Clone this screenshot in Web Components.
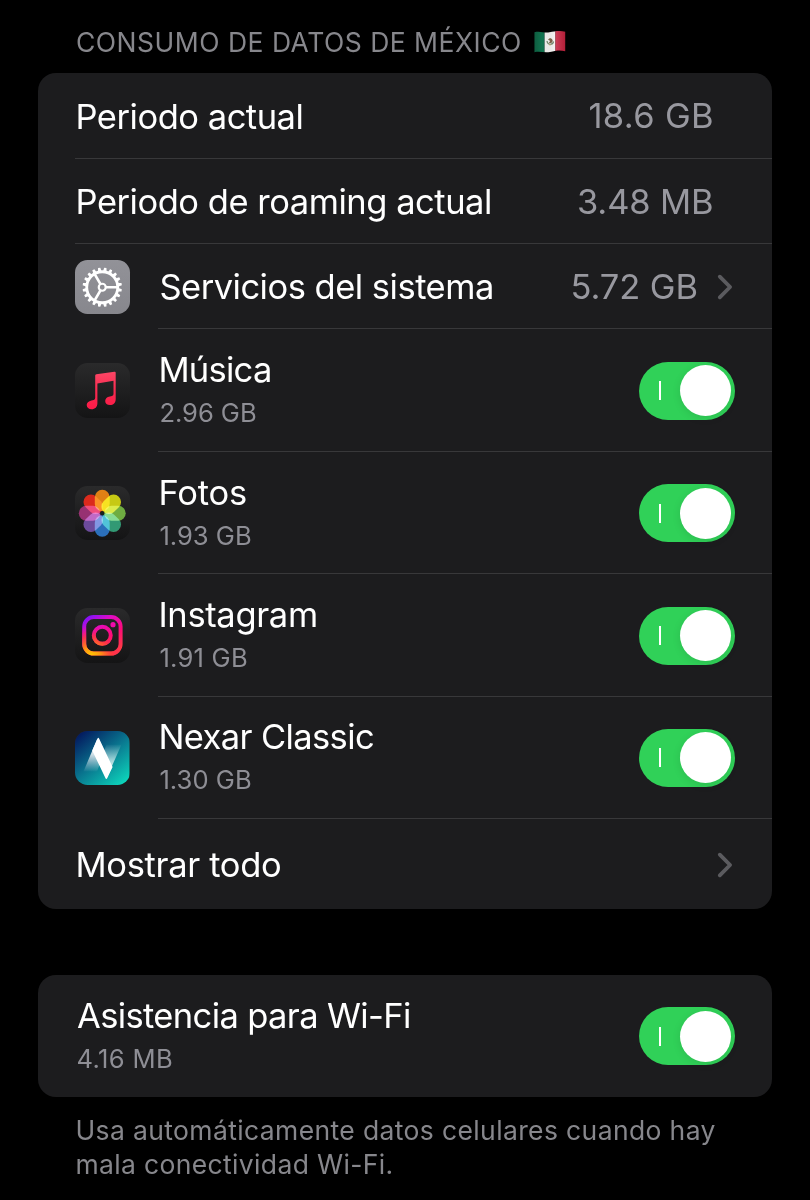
<!DOCTYPE html>
<html lang="es">
<head>
<meta charset="utf-8">
<title>Datos celulares</title>
<style>
html,body{margin:0;background:#000}
body{width:810px;height:1200px;overflow:hidden;font-family:Inter,"Liberation Sans",sans-serif;color:#fff}
</style>
</head>
<body>
<settings-page></settings-page>
<script>
const define = (name, html, Base = HTMLElement) => customElements.define(name, class extends Base {
  constructor() {
    super();
    const t = document.createElement('template');
    t.innerHTML = html;
    this.attachShadow({ mode: 'open' }).append(t.content.cloneNode(true));
  }
});

/* One line of text whose letters are tracked to fill the width in "w". */
const ctx = document.createElement('canvas').getContext('2d');
customElements.define('fit-text', class extends HTMLElement {
  constructor() {
    super();
    this.attachShadow({ mode: 'open' }).innerHTML =
      '<style>:host{display:block;white-space:pre;flex:none}</style><slot></slot>';
  }
  connectedCallback() {
    const w = +this.getAttribute('w'), s = getComputedStyle(this), text = this.textContent;
    ctx.font = `${s.fontWeight} ${s.fontSize} ${s.fontFamily}`;
    const m = ctx.measureText(text);
    const left = m.actualBoundingBoxLeft / 2;
    const ink = left + m.actualBoundingBoxRight;
    this.style.width = w + 'px';
    this.style.letterSpacing = ((w - ink) / (text.length - 1)).toFixed(3) + 'px';
    this.style.textIndent = left.toFixed(2) + 'px';
  }
});

define('ios-switch', `
<style>
:host{display:flex;align-items:center;box-sizing:border-box;width:96px;height:58px;border-radius:29px;background:#30d158;padding:0 3.5px 0 20.5px;justify-content:space-between;flex:none}
i{width:2px;height:19px;background:#fff}
b{width:51px;height:51px;border-radius:50%;background:#fff;box-shadow:0 2px 9px rgba(0,0,0,.1)}
</style><i></i><b></b>`);

define('ios-chevron', `
<style>:host{display:block;width:16px;height:26px;flex:none;margin-right:2px}svg{display:block}</style>
<svg width="16" height="26" viewBox="0 0 16 26" fill="none" stroke="#5b5b5f" stroke-width="3.800" stroke-linecap="round" stroke-linejoin="round"><path d="M2.8 2.7 13.1 13 2.8 23.3"/></svg>`);

define('mexico-flag', `
<style>:host{display:block;width:32px;height:24px;flex:none}svg{display:block}</style>
<svg width="32" height="24" viewBox="0 0 32 24">
<defs><clipPath id="f"><path d="M.5 2.2C6 .6 10 3.2 15.5 2.3S25 .3 31.2 1.7V21.3C26 19.8 21 20.8 16 22S6 21 .5 22.2Z"/></clipPath>
<linearGradient id="s"><stop stop-color="#000" stop-opacity=".2"/><stop offset=".25" stop-opacity="0"/><stop offset=".65" stop-color="#fff" stop-opacity=".15"/><stop offset="1" stop-opacity=".12"/></linearGradient></defs>
<g clip-path="url(#f)"><path fill="#11734f" d="M0 0h10.6v24H0z"/><path fill="#f2f1ef" d="M10.6 0h10.8v24H10.6z"/><path fill="#c9213e" d="M21.4 0H32v24H21.4z"/><path fill="url(#s)" d="M0 0h32v24H0z"/></g>
<path d="M13 11c.5 4 5.500 4.500 6.600.5" fill="none" stroke="#71866a" stroke-width="1.200"/><path d="M14 9.500 16 8l2 1 .8 2-1.600 2.300-2.400-.6 1.400-1.600Z" fill="#796148"/><circle cx="16" cy="14.800" r=".8" fill="#b19b62"/>
</svg>`);

define('icon-tile', `
<style>:host{display:block;width:54.5px;height:54.5px;flex:none;border-radius:12.5px;overflow:hidden;background:linear-gradient(#2a2a2b,#141415)}
::slotted(svg){display:block;width:100%;height:100%}</style><slot></slot>`);

const teeth = Array.from({ length: 20 }, (_, i) =>
  `<path transform="rotate(${i * 18 + 9} 27.25 27.25)" d="M25.5 11 26.100 7.600h2.300l.6 3.400Z"/>`).join('');
define('icon-gear', `
<style>:host{display:block}icon-tile{background:linear-gradient(#929298,#87878d)}</style>
<icon-tile><svg viewBox="0 0 54.5 54.5"><g fill="#fff">${teeth}</g>
<g fill="none" stroke="#fff"><circle cx="27.250" cy="27.250" r="15.500" stroke-width="2.800"/><circle cx="27.250" cy="27.250" r="3.500" stroke-width="2.200"/>
<path stroke-width="2.500" d="M31 27.250H42.500M25.400 24 19.600 14M25.400 30.500 19.600 40.500"/></g></svg></icon-tile>`);

define('icon-music', `
<style>:host{display:block}</style>
<icon-tile><svg viewBox="0 0 54.5 54.5"><defs><linearGradient id="m" x2="0" y2="1"><stop stop-color="#fb4766"/><stop offset=".5" stop-color="#fa2a50"/><stop offset="1" stop-color="#fb1b48"/></linearGradient></defs>
<path fill="url(#m)" d="M20.200 12.600Q20.200 11.600 21.300 11.300L39.400 8.700Q40.700 8.500 40.700 9.700V36.300C40.700 39.900 38.300 42.100 35 42.100 32.100 42.100 30.200 40.400 30.200 38 30.200 35.500 31.900 34 34.900 33.400L37 33Q38.500 32.700 38.500 31V17.700L22.400 20.500V40.200C22.400 44 20 46.200 16.600 46.200 13.700 46.200 11.700 44.500 11.700 42 11.700 39.600 13.500 38 16.500 37.400L18.700 37Q20.200 36.700 20.200 35Z"/></svg></icon-tile>`);

const petals = ['#f58b12', '#d9dc12', '#78bd45', '#35a77e', '#2d79cc', '#7551ab', '#a4337b', '#f02b1b']
  .map((c, i) => `<rect style="mix-blend-mode:screen;opacity:.9" x="19.800" y="3.800" width="14.900" height="21.500" rx="7.450" fill="${c}" transform="rotate(${i * 45} 27.250 27.250)"/>`).join('');
define('icon-photos', `
<style>:host{display:block}g{isolation:isolate}</style>
<icon-tile><svg viewBox="0 0 54.5 54.5"><g>${petals}</g><circle cx="27.250" cy="27.250" r="1.900" fill="#18231c"/></svg></icon-tile>`);

define('icon-instagram', `
<style>:host{display:block}</style>
<icon-tile><svg viewBox="0 0 54.5 54.5"><defs>
<linearGradient id="a" gradientUnits="userSpaceOnUse" x1="12" y1="8" x2="36" y2="46"><stop stop-color="#7a12ff"/><stop offset=".3" stop-color="#e20cc4"/><stop offset=".65" stop-color="#ff0b78"/><stop offset="1" stop-color="#ff3a45"/></linearGradient>
<radialGradient id="b" gradientUnits="userSpaceOnUse" cx="16" cy="49" r="31"><stop stop-color="#ffd000"/><stop offset=".3" stop-color="#ff9a10"/><stop offset=".65" stop-color="#ff3d38" stop-opacity=".8"/><stop offset="1" stop-color="#ff0a70" stop-opacity="0"/></radialGradient>
<g id="g" fill="none"><rect x="9.200" y="9.100" width="36.400" height="36.400" rx="9.500" stroke-width="4"/><circle cx="27.300" cy="27.300" r="8.500" stroke-width="3.900"/></g></defs>
<use href="#g" stroke="url(#a)"/><use href="#g" stroke="url(#b)"/><circle cx="38" cy="16.700" r="2.600" fill="#f00cab"/></svg></icon-tile>`);

define('icon-nexar', `
<style>:host{display:block}</style>
<icon-tile><svg viewBox="0 0 54.5 54.5"><defs>
<linearGradient id="n" x1=".08" y1="0" x2=".9" y2="1"><stop stop-color="#03145c"/><stop offset=".48" stop-color="#09728d"/><stop offset="1" stop-color="#0dd9bd"/></linearGradient>
<linearGradient id="l" gradientUnits="userSpaceOnUse" x1="0" y1="9" x2="0" y2="41"><stop stop-color="#fff"/><stop offset=".45" stop-color="#fff" stop-opacity=".8"/><stop offset="1" stop-color="#fff" stop-opacity="0"/></linearGradient>
<linearGradient id="r" gradientUnits="userSpaceOnUse" x1="0" y1="13" x2="0" y2="47"><stop stop-color="#fff" stop-opacity="0"/><stop offset=".5" stop-color="#fff" stop-opacity=".65"/><stop offset="1" stop-color="#fff"/></linearGradient></defs>
<path fill="url(#n)" d="M0 0h54.500v54.500H0z"/><path fill="url(#l)" d="M22.400 7.500 28 25 22 40.500H8.500Z"/><path fill="url(#r)" d="M31.500 13.500H46.500L31.500 47.500 25 30Z"/><path fill="#fff" d="M22.700 7.200Q23.400 5.900 24.200 7.700L37.600 36 32.300 47Q31.200 48.800 30.400 47L17.200 19.500Z"/></svg></icon-tile>`);

define('settings-card', `
<style>:host{display:block;box-sizing:border-box;background:#1c1c1e;border-radius:18px;overflow:hidden}</style><slot></slot>`);

/* Row: icon, title with optional detail, value and accessory. */
define('settings-row', `
<style>
:host{display:flex;box-sizing:border-box;height:var(--h,85.4px);padding-left:39px}
.icon{display:flex;align-items:center;flex:none}
:host([icon]) .icon{margin-left:-1.600px}
.main{flex:1;display:flex;align-items:center;justify-content:space-between;padding-right:37.500px;box-sizing:border-box;position:relative}
:host([rule]) .main::after{content:"";position:absolute;bottom:0;right:0;left:-2px;height:1px;background:#38383a}
:host([icon]) .main{margin-left:30px}
.text{display:flex;flex-direction:column;font-size:34.5px;line-height:44px;padding-top:2px}
:host([detail]) .text{line-height:42px;padding-top:3px}
.text ::slotted([slot=detail]){font-size:25.6px;line-height:44px;color:#8e8e95}
.end{display:flex;align-items:center;gap:20px;font-size:34.5px;line-height:44px;color:#98989f;padding-top:1px}
:host([icon]:not([detail])) .text{padding-top:1px}
:host([detail]) .end{padding:0}
:host([plain]) .end{padding-right:22.500px}
</style>
<div class="icon"><slot name="icon"></slot></div>
<div class="main"><div class="text"><slot></slot><slot name="detail"></slot></div><div class="end"><slot name="end"></slot></div></div>`);

define('settings-page', `
<style>
:host{display:flex;flex-direction:column;box-sizing:border-box;width:810px;height:1200px;padding:24px 38px 0;background:#000}
header{display:flex;align-items:center;gap:13.500px;height:36px;padding-left:38.500px;margin-bottom:13.300px;font-size:26.500px;line-height:36px;color:#87878c}
.wifi{margin-top:66.200px}
footer{padding:17.500px 0 0 38.500px;font-size:26.500px;line-height:33.500px;color:#87878c}
.app{--h:122.430px}
</style>
<header><fit-text w="443.5">CONSUMO DE DATOS DE MÉXICO</fit-text><mexico-flag></mexico-flag></header>
<settings-card>
<settings-row rule plain><fit-text w="224.5">Periodo actual</fit-text><fit-text slot="end" w="123">18.6 GB</fit-text></settings-row>
<settings-row rule plain><fit-text w="413">Periodo de roaming actual</fit-text><fit-text slot="end" w="134">3.48 MB</fit-text></settings-row>
<settings-row rule icon><icon-gear slot="icon"></icon-gear><fit-text w="332">Servicios del sistema</fit-text><fit-text slot="end" w="125">5.72 GB</fit-text><ios-chevron slot="end"></ios-chevron></settings-row>
<settings-row class="app" rule icon detail><icon-music slot="icon"></icon-music><fit-text w="110">Música</fit-text><fit-text slot="detail" w="96">2.96 GB</fit-text><ios-switch slot="end"></ios-switch></settings-row>
<settings-row class="app" rule icon detail><icon-photos slot="icon"></icon-photos><fit-text w="86">Fotos</fit-text><fit-text slot="detail" w="91">1.93 GB</fit-text><ios-switch slot="end"></ios-switch></settings-row>
<settings-row class="app" rule icon detail><icon-instagram slot="icon"></icon-instagram><fit-text w="156">Instagram</fit-text><fit-text slot="detail" w="87">1.91 GB</fit-text><ios-switch slot="end"></ios-switch></settings-row>
<settings-row class="app" rule icon detail><icon-nexar slot="icon"></icon-nexar><fit-text w="214">Nexar Classic</fit-text><fit-text slot="detail" w="91">1.30 GB</fit-text><ios-switch slot="end"></ios-switch></settings-row>
<settings-row style="--h:90px"><fit-text w="203">Mostrar todo</fit-text><ios-chevron slot="end"></ios-chevron></settings-row>
</settings-card>
<settings-card class="wifi"><settings-row style="--h:121.500px" detail><fit-text w="333">Asistencia para Wi-Fi</fit-text><fit-text slot="detail" w="95">4.16 MB</fit-text><ios-switch slot="end"></ios-switch></settings-row></settings-card>
<footer><fit-text w="639">Usa automáticamente datos celulares cuando hay</fit-text><fit-text w="315">mala conectividad Wi-Fi.</fit-text></footer>`);
</script>
</body>
</html>
